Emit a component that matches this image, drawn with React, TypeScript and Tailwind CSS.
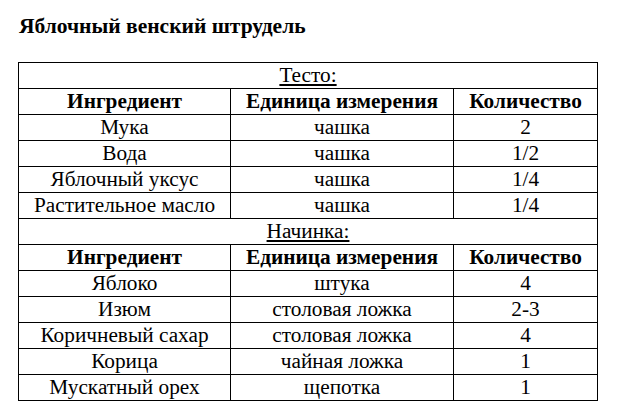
import React from 'react';

const dough = [
  ['Мука', 'чашка', '2'],
  ['Вода', 'чашка', '1/2'],
  ['Яблочный уксус', 'чашка', '1/4'],
  ['Растительное масло', 'чашка', '1/4'],
];

const filling = [
  ['Яблоко', 'штука', '4'],
  ['Изюм', 'столовая ложка', '2-3'],
  ['Коричневый сахар', 'столовая ложка', '4'],
  ['Корица', 'чайная ложка', '1'],
  ['Мускатный орех', 'щепотка', '1'],
];

function Section({ title, rows }: { title: string; rows: string[][] }) {
  return (
    <>
      <tr className="h-[26px]">
        <td colSpan={3} className="border border-black p-0 text-center leading-none">
          <span className="underline underline-offset-2">{title}</span>
        </td>
      </tr>
      <tr className="h-[26px]">
        <th className="border border-black p-0 font-bold leading-none">Ингредиент</th>
        <th className="border border-black p-0 font-bold leading-none">Единица измерения</th>
        <th className="border border-black p-0 font-bold leading-none">Количество</th>
      </tr>
      {rows.map((r, i) => (
        <tr key={i} className="h-[26px]">
          {r.map((c, j) => (
            <td key={j} className="border border-black p-0 text-center leading-none">
              {c}
            </td>
          ))}
        </tr>
      ))}
    </>
  );
}

export default function App() {
  return (
    <div className="w-[617px] h-[415px] bg-white text-black font-['Liberation_Serif','Times_New_Roman',serif] pt-[14px] pl-[19px]">
      <h1 className="text-[21.5px] leading-[24px] font-bold">Яблочный венский штрудель</h1>
      <table className="mt-[24px] w-[579px] table-fixed border-collapse text-[21.3px] -ml-px">
        <colgroup>
          <col className="w-[212px]" />
          <col className="w-[223px]" />
          <col className="w-[144px]" />
        </colgroup>
        <tbody>
          <Section title="Тесто:" rows={dough} />
          <Section title="Начинка:" rows={filling} />
        </tbody>
      </table>
    </div>
  );
}
